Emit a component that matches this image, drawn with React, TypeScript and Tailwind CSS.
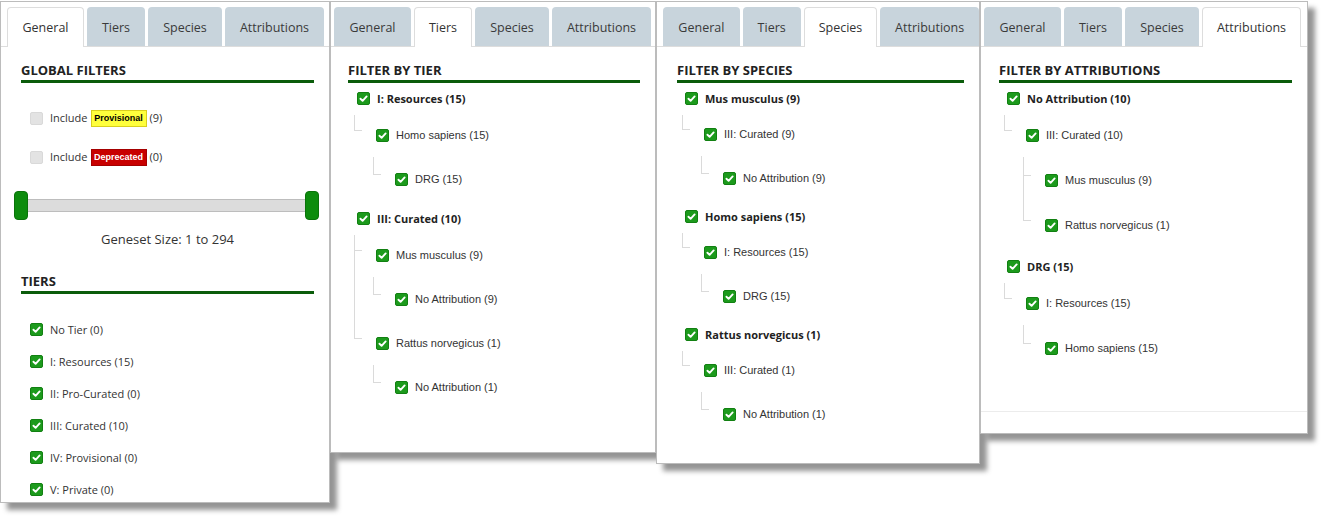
import React from 'react';

type TNode = { label: string; children?: TNode[] };
type Cfg = { first: string; sub: string; top: string; s1: string; s2: string; sn: string };

const TABS: { label: string; w: string }[] = [
  { label: 'General', w: 'w-[77px]' },
  { label: 'Tiers', w: 'w-[58px]' },
  { label: 'Species', w: 'w-[74px]' },
  { label: 'Attributions', w: 'w-[99px]' },
];

function Tabs({ active, pl }: { active: number; pl: string }) {
  return (
    <div className={`flex items-end gap-[3px] pt-[5px] border-b border-[#dddddd] ${pl}`}>
      {TABS.map((t, i) =>
        i === active ? (
          <div
            key={t.label}
            className={`${t.w} h-[40px] -mb-px flex items-center justify-center bg-white border border-[#dddddd] border-b-0 rounded-t-[4px] text-[12.5px] text-[#333]`}
          >
            <span className="pt-[2px]">{t.label}</span>
          </div>
        ) : (
          <div
            key={t.label}
            className={`${t.w} h-[39px] flex items-center justify-center bg-[#c8d4dc] rounded-t-[4px] text-[12.5px] text-[#3a3a3a]`}
          >
            <span className="pt-[3px]">{t.label}</span>
          </div>
        )
      )}
    </div>
  );
}

function Heading({ children, mt }: { children: React.ReactNode; mt: string }) {
  return (
    <div
      className={`${mt} border-b-[3px] border-[#0b5c0b] pb-[1px] text-[13px] leading-[18px] font-bold text-[#222] uppercase`}
    >
      {children}
    </div>
  );
}

function Check() {
  return (
    <span className="w-[13px] h-[13px] rounded-[2px] bg-[#1c9a1c] border border-[#128012] flex items-center justify-center shrink-0">
      <svg width="9" height="9" viewBox="0 0 10 10">
        <path
          d="M1.6 5.3 L4 7.6 L8.5 2.7"
          stroke="white"
          strokeWidth="2.1"
          fill="none"
          strokeLinecap="round"
          strokeLinejoin="round"
        />
      </svg>
    </span>
  );
}

function Unchecked() {
  return <span className="w-[13px] h-[13px] rounded-[2px] bg-[#e3e3e3] border border-[#d9d9d9] shrink-0" />;
}

function TreeRow({ label, bold }: { label: string; bold: boolean }) {
  return (
    <div className="flex items-center h-[13px] pl-[3px]">
      <Check />
      <span
        className={
          bold
            ? "ml-[7px] text-[11px] leading-[13px] font-bold text-[#222] whitespace-nowrap"
            : "ml-[7px] text-[11px] leading-[13px] text-[#333] whitespace-nowrap font-['Liberation_Sans',Arial,sans-serif]"
        }
      >
        {label}
      </span>
    </div>
  );
}

function TreeNode({ node, depth, cfg }: { node: TNode; depth: number; cfg: Cfg }) {
  const kids = node.children || [];
  return (
    <div>
      <TreeRow label={node.label} bold={depth === 0} />
      {kids.map((c, i) => {
        const first = i === 0;
        const last = i === kids.length - 1;
        const pt = first && depth === 0 ? cfg.first : cfg.sub;
        const stub = first ? (depth === 0 ? cfg.s1 : cfg.s2) : cfg.sn;
        return (
          <div key={i} className="flex">
            <div className="w-[19px] shrink-0 flex flex-col">
              {first && <div className={depth === 0 ? 'h-[10px] shrink-0' : 'h-[15px] shrink-0'} />}
              <div className={`w-[8px] shrink-0 border-l border-b border-[#dadada] ${stub}`} />
              {!last && <div className="flex-1 border-l border-[#dadada]" />}
            </div>
            <div className={`flex-1 min-w-0 ${pt}`}>
              <TreeNode node={c} depth={depth + 1} cfg={cfg} />
            </div>
          </div>
        );
      })}
    </div>
  );
}

function Tree({ nodes, cfg, ml }: { nodes: TNode[]; cfg: Cfg; ml: string }) {
  return (
    <div className={`${ml} mt-[9px]`}>
      {nodes.map((n, i) => (
        <div key={i} className={i > 0 ? cfg.top : ''}>
          <TreeNode node={n} depth={0} cfg={cfg} />
        </div>
      ))}
    </div>
  );
}

function Panel({
  size,
  tabPl,
  contentPl,
  active,
  children,
  footer,
}: {
  size: string;
  tabPl: string;
  contentPl: string;
  active: number;
  children: React.ReactNode;
  footer?: boolean;
}) {
  return (
    <div
      className={`${size} shrink-0 flex flex-col bg-white border border-[#bcbcbc] shadow-[7px_7px_5px_rgba(0,0,0,0.42)]`}
    >
      <Tabs active={active} pl={tabPl} />
      <div className={`flex-1 flex flex-col ${contentPl} pr-[15px]`}>{children}</div>
      {footer && <div className="h-[22px] shrink-0 border-t border-[#ececec]" />}
    </div>
  );
}

function Badge({ kind }: { kind: 'prov' | 'dep' }) {
  return kind === 'prov' ? (
    <span className="ml-[3px] w-[56px] h-[17px] flex items-center justify-center bg-[#ffff3c] border border-[#d9cf1c] text-[9px] font-bold text-black font-['Liberation_Sans',Arial,sans-serif]">
      Provisional
    </span>
  ) : (
    <span className="ml-[3px] w-[56px] h-[17px] flex items-center justify-center bg-[#c80000] border border-[#a50000] text-[9px] font-bold text-white font-['Liberation_Sans',Arial,sans-serif]">
      Deprecated
    </span>
  );
}

function IncludeRow({ kind, count, mt }: { kind: 'prov' | 'dep'; count: string; mt: string }) {
  return (
    <div className={`${mt} pl-[9px] flex items-center h-[17px] text-[11px] text-[#333]`}>
      <Unchecked />
      <span className="ml-[7px]">Include</span>
      <Badge kind={kind} />
      <span className="ml-[3px]">{count}</span>
    </div>
  );
}

function TierItem({ label, mt }: { label: string; mt: string }) {
  return (
    <div className={`${mt} pl-[9px] flex items-center h-[13px]`}>
      <Check />
      <span className="ml-[7px] text-[11px] leading-[13px] text-[#333]">{label}</span>
    </div>
  );
}

function Handle() {
  return <div className="relative w-[14px] h-[29px] shrink-0 rounded-[4px] bg-[#0d8c0d] border border-[#0a730a]" />;
}

const P2: TNode[] = [
  { label: 'I: Resources (15)', children: [{ label: 'Homo sapiens (15)', children: [{ label: 'DRG (15)' }] }] },
  {
    label: 'III: Curated (10)',
    children: [
      { label: 'Mus musculus (9)', children: [{ label: 'No Attribution (9)' }] },
      { label: 'Rattus norvegicus (1)', children: [{ label: 'No Attribution (1)' }] },
    ],
  },
];

const P3: TNode[] = [
  { label: 'Mus musculus (9)', children: [{ label: 'III: Curated (9)', children: [{ label: 'No Attribution (9)' }] }] },
  { label: 'Homo sapiens (15)', children: [{ label: 'I: Resources (15)', children: [{ label: 'DRG (15)' }] }] },
  {
    label: 'Rattus norvegicus (1)',
    children: [{ label: 'III: Curated (1)', children: [{ label: 'No Attribution (1)' }] }],
  },
];

const P4: TNode[] = [
  {
    label: 'No Attribution (10)',
    children: [
      {
        label: 'III: Curated (10)',
        children: [{ label: 'Mus musculus (9)' }, { label: 'Rattus norvegicus (1)' }],
      },
    ],
  },
  { label: 'DRG (15)', children: [{ label: 'I: Resources (15)', children: [{ label: 'Homo sapiens (15)' }] }] },
];

const cfg2: Cfg = { first: 'pt-[24px]', sub: 'pt-[31px]', top: 'mt-[26px]', s1: 'h-[16px]', s2: 'h-[18px]', sn: 'h-[33px]' };
const cfg3: Cfg = { first: 'pt-[23px]', sub: 'pt-[31px]', top: 'mt-[25px]', s1: 'h-[15px]', s2: 'h-[18px]', sn: 'h-[33px]' };
const cfg4: Cfg = { first: 'pt-[24px]', sub: 'pt-[32px]', top: 'mt-[28px]', s1: 'h-[16px]', s2: 'h-[19px]', sn: 'h-[34px]' };

export default function App() {
  return (
    <div className="w-[1327px] h-[522px] overflow-hidden bg-white pt-[1px] flex items-start font-['Open_Sans',sans-serif] text-[#333]">
      <Panel size="w-[330px] h-[502px]" tabPl="pl-[6px]" contentPl="pl-[20px]" active={0}>
        <Heading mt="mt-[14px]">Global Filters</Heading>
        <IncludeRow kind="prov" count="(9)" mt="mt-[27px]" />
        <IncludeRow kind="dep" count="(0)" mt="mt-[22px]" />
        <div className="mt-[25px] -ml-[7px] -mr-[5px] flex items-center">
          <Handle />
          <div className="flex-1 h-[13px] -mx-[3px] bg-[#dcdcdc] border-y border-[#bdbdbd]" />
          <Handle />
        </div>
        <div className="mt-[10px] text-center text-[13px] leading-[18px] text-[#333]">Geneset Size: 1 to 294</div>
        <Heading mt="mt-[24px]">Tiers</Heading>
        <TierItem label="No Tier (0)" mt="mt-[29px]" />
        <TierItem label="I: Resources (15)" mt="mt-[19px]" />
        <TierItem label="II: Pro-Curated (0)" mt="mt-[19px]" />
        <TierItem label="III: Curated (10)" mt="mt-[19px]" />
        <TierItem label="IV: Provisional (0)" mt="mt-[19px]" />
        <TierItem label="V: Private (0)" mt="mt-[19px]" />
      </Panel>
      <Panel size="w-[326px] h-[452px]" tabPl="pl-[3px]" contentPl="pl-[17px]" active={1}>
        <Heading mt="mt-[14px]">Filter by Tier</Heading>
        <Tree nodes={P2} cfg={cfg2} ml="ml-[6px]" />
      </Panel>
      <Panel size="w-[324px] h-[463px]" tabPl="pl-[6px]" contentPl="pl-[20px]" active={2}>
        <Heading mt="mt-[14px]">Filter by Species</Heading>
        <Tree nodes={P3} cfg={cfg3} ml="ml-[5px]" />
      </Panel>
      <Panel size="w-[328px] h-[433px]" tabPl="pl-[3px]" contentPl="pl-[18px]" active={3} footer>
        <Heading mt="mt-[14px]">Filter by Attributions</Heading>
        <Tree nodes={P4} cfg={cfg4} ml="ml-[5px]" />
      </Panel>
    </div>
  );
}
